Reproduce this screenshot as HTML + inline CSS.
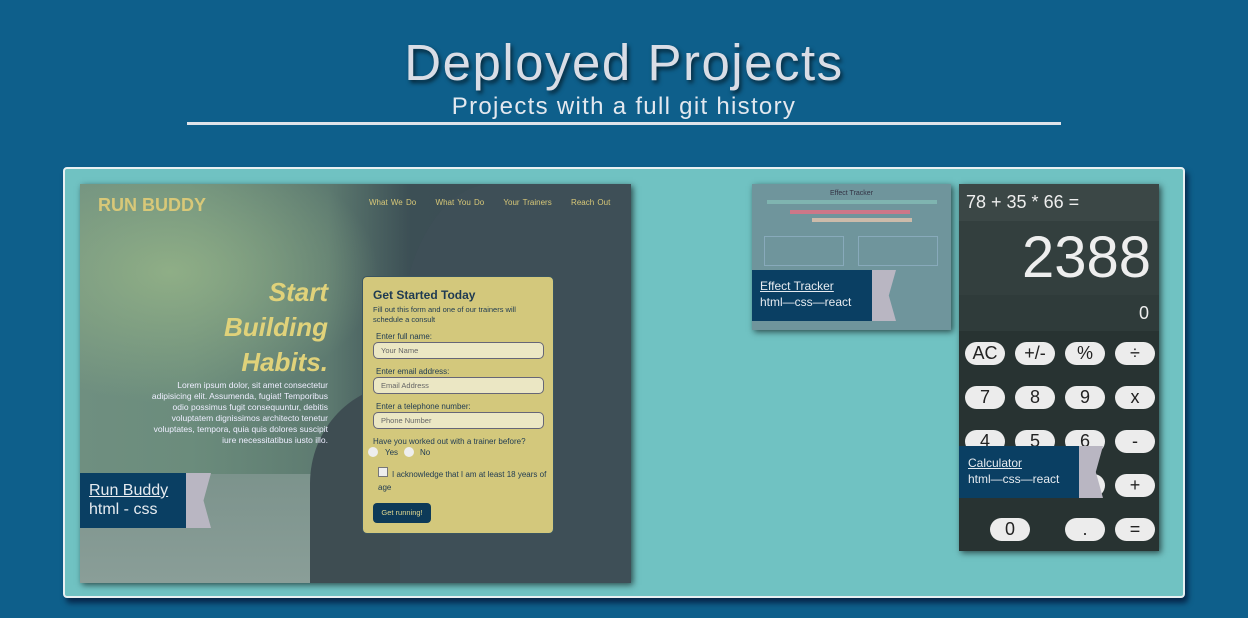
<!DOCTYPE html>
<html><head><meta charset="utf-8"><style>
*{margin:0;padding:0;box-sizing:border-box}
body{width:1248px;height:618px;background:#0e5f8b;font-family:"Liberation Sans",sans-serif;position:relative;overflow:hidden}
.a{position:absolute}
h1{position:absolute;left:0;width:1248px;top:33px;text-align:center;font-weight:normal;font-size:51px;letter-spacing:1.5px;color:#d9dde6;text-shadow:2px 3px 4px rgba(0,0,0,.6)}
.sub{left:0;width:1248px;top:93px;text-align:center;font-size:24px;letter-spacing:1.3px;color:#e3e8ef}
.line{left:187px;top:122px;width:874px;height:3px;background:#dfe3ea}
.panel{left:63px;top:167px;width:1122px;height:431px;background:#70c2c2;border:2px solid #e8f0f2;border-radius:4px;box-shadow:3px 5px 6px rgba(0,0,30,.6)}
.rb{left:80px;top:184px;width:551px;height:399px;overflow:hidden;background:linear-gradient(90deg,#6f8f80 0%,#6b8c7c 20%,#5d7a70 45%,#3c4f55 60%,#3b4c55 100%);box-shadow:2px 2px 6px rgba(0,0,0,.6)}
.lab{background:#0a3f63;color:#e6ebf0;}
.lab u{text-decoration:underline}
.btn{position:absolute;width:40px;height:23px;background:#ececec;border-radius:12px;color:#222;text-align:center;font-size:18px;line-height:23px}
</style></head><body>
<h1>Deployed Projects</h1>
<div class="a sub">Projects with a full git history</div>
<div class="a line"></div>
<div class="a panel"></div>

<div class="a rb">
 <div class="a" style="left:0;top:0;width:300px;height:220px;background:radial-gradient(ellipse at 30% 40%,#8fae86,transparent 70%)"></div>
 <div class="a" style="left:0;top:290px;width:551px;height:109px;background:linear-gradient(#7c938c,#8a9e98)"></div>
 <div class="a" style="left:230px;top:200px;width:190px;height:199px;background:#3e4d52;border-radius:50% 40% 0 0"></div>
 <div class="a" style="left:320px;top:0;width:231px;height:399px;background:#3e4f57;border-radius:40% 0 0 0"></div>
 <div class="a" style="left:18px;top:11px;font-size:18px;font-weight:bold;color:#d8c878">RUN BUDDY</div>
 <div class="a" style="left:289px;top:14px;font-size:8px;color:#d8c878;word-spacing:1px">What We Do&nbsp;&nbsp;&nbsp;&nbsp;&nbsp; What You Do&nbsp;&nbsp;&nbsp;&nbsp;&nbsp; Your Trainers&nbsp;&nbsp;&nbsp;&nbsp;&nbsp; Reach Out</div>
 <div class="a" style="left:60px;top:91px;width:188px;text-align:right;font-size:26px;font-weight:bold;font-style:italic;color:#e0d27a;line-height:35px">Start<br>Building<br>Habits.</div>
 <div class="a" style="left:70px;top:196px;width:178px;text-align:right;font-size:8.5px;color:#eef;line-height:11px">Lorem ipsum dolor, sit amet consectetur adipisicing elit. Assumenda, fugiat! Temporibus odio possimus fugit consequuntur, debitis voluptatem dignissimos architecto tenetur voluptates, tempora, quia quis dolores suscipit iure necessitatibus iusto illo.</div>
 <div class="a" style="left:282px;top:92px;width:192px;height:258px;background:#d3c87c;border:1px solid #3a5560;border-radius:5px;color:#1e3a52;font-size:8px">
  <div style="position:absolute;left:10px;top:11px;font-size:12px;font-weight:bold">Get Started Today</div>
  <div style="position:absolute;left:10px;top:28px;width:175px;font-size:7.5px;line-height:10px">Fill out this form and one of our trainers will schedule a consult</div>
  <div style="position:absolute;left:13px;top:55px">Enter full name:</div>
  <div style="position:absolute;left:10px;top:65px;width:171px;height:17px;background:#ebe7c4;border:1px solid #667;border-radius:5px;font-size:7.5px;color:#666;padding:3px 7px">Your Name</div>
  <div style="position:absolute;left:13px;top:90px">Enter email address:</div>
  <div style="position:absolute;left:10px;top:100px;width:171px;height:17px;background:#ebe7c4;border:1px solid #667;border-radius:5px;font-size:7.5px;color:#666;padding:3px 7px">Email Address</div>
  <div style="position:absolute;left:13px;top:125px">Enter a telephone number:</div>
  <div style="position:absolute;left:10px;top:135px;width:171px;height:17px;background:#ebe7c4;border:1px solid #667;border-radius:5px;font-size:7.5px;color:#666;padding:3px 7px">Phone Number</div>
  <div style="position:absolute;left:10px;top:160px">Have you worked out with a trainer before?</div>
  <div style="position:absolute;left:5px;top:170px;width:10px;height:10px;border-radius:50%;background:#eee"></div>
  <div style="position:absolute;left:22px;top:171px">Yes</div>
  <div style="position:absolute;left:41px;top:170px;width:10px;height:10px;border-radius:50%;background:#eee"></div>
  <div style="position:absolute;left:57px;top:171px">No</div>
  <div style="position:absolute;left:15px;top:190px;width:10px;height:10px;background:#eee;border:1px solid #777"></div>
  <div style="position:absolute;left:15px;top:191px;width:175px;text-indent:14px;line-height:13px">I acknowledge that I am at least 18 years of age</div>
  <div style="position:absolute;left:10px;top:226px;width:58px;height:20px;background:#0d3a58;border-radius:4px;color:#e0d890;font-size:7.5px;text-align:center;line-height:20px">Get running!</div>
 </div>
 <div class="a lab" style="left:0;top:289px;width:106px;height:55px;padding:8px 9px;font-size:16px;line-height:19px"><u>Run Buddy</u><br>html - css</div>
 <div class="a" style="left:106px;top:289px;width:25px;height:55px;background:#b9b6c2;clip-path:polygon(0 0,100% 0,70% 50%,100% 100%,0 100%)"></div>
</div>

<div class="a" style="left:752px;top:184px;width:199px;height:146px;background:#6f959c;box-shadow:2px 2px 6px rgba(0,0,0,.6);overflow:hidden">
 <div class="a" style="left:0;top:6px;width:199px;text-align:center;font-size:7px;color:#334">Effect Tracker</div>
 <div class="a" style="left:15px;top:16px;width:170px;height:4px;background:#7fb4b0"></div>
 <div class="a" style="left:38px;top:26px;width:120px;height:4px;background:#c78"></div>
 <div class="a" style="left:60px;top:34px;width:100px;height:4px;background:#cba"></div>
 <div class="a" style="left:12px;top:52px;width:80px;height:30px;border:1px solid #8ab"></div>
 <div class="a" style="left:106px;top:52px;width:80px;height:30px;border:1px solid #8ab"></div>
 <div class="a lab" style="left:0;top:86px;width:120px;height:51px;padding:8px 8px;font-size:12px;line-height:16px"><u>Effect Tracker</u><br>html—css—react</div>
 <div class="a" style="left:120px;top:86px;width:24px;height:51px;background:#b9b6c2;clip-path:polygon(0 0,100% 0,70% 50%,100% 100%,0 100%)"></div>
</div>

<div class="a" style="left:959px;top:184px;width:200px;height:367px;background:#283332;box-shadow:2px 2px 6px rgba(0,0,0,.6);overflow:hidden;color:#eee">
 <div class="a" style="left:0;top:0;width:200px;height:37px;background:#3b4746;font-size:18px;padding:8px 7px">78 + 35 * 66 =</div>
 <div class="a" style="left:0;top:37px;width:200px;height:74px;background:#333f3e;font-size:58px;text-align:right;padding:2px 8px 0 0;line-height:70px">2388</div>
 <div class="a" style="left:0;top:111px;width:200px;height:36px;background:#2f3b3a;font-size:18px;text-align:right;padding:8px 10px">0</div>
 <div class="btn" style="left:6px;top:158px">AC</div><div class="btn" style="left:56px;top:158px">+/-</div><div class="btn" style="left:106px;top:158px">%</div><div class="btn" style="left:156px;top:158px">÷</div>
 <div class="btn" style="left:6px;top:202px">7</div><div class="btn" style="left:56px;top:202px">8</div><div class="btn" style="left:106px;top:202px">9</div><div class="btn" style="left:156px;top:202px">x</div>
 <div class="btn" style="left:6px;top:246px">4</div><div class="btn" style="left:56px;top:246px">5</div><div class="btn" style="left:106px;top:246px">6</div><div class="btn" style="left:156px;top:246px">-</div>
 <div class="btn" style="left:106px;top:290px">3</div><div class="btn" style="left:156px;top:290px">+</div>
 <div class="btn" style="left:31px;top:334px">0</div><div class="btn" style="left:106px;top:334px">.</div><div class="btn" style="left:156px;top:334px">=</div>
 <div class="a lab" style="left:0;top:262px;width:120px;height:52px;padding:9px 9px;font-size:12px;line-height:16px"><u>Calculator</u><br>html—css—react</div>
 <div class="a" style="left:120px;top:262px;width:24px;height:52px;background:#b9b6c2;clip-path:polygon(0 0,100% 0,70% 50%,100% 100%,0 100%)"></div>
</div>
</body></html>
